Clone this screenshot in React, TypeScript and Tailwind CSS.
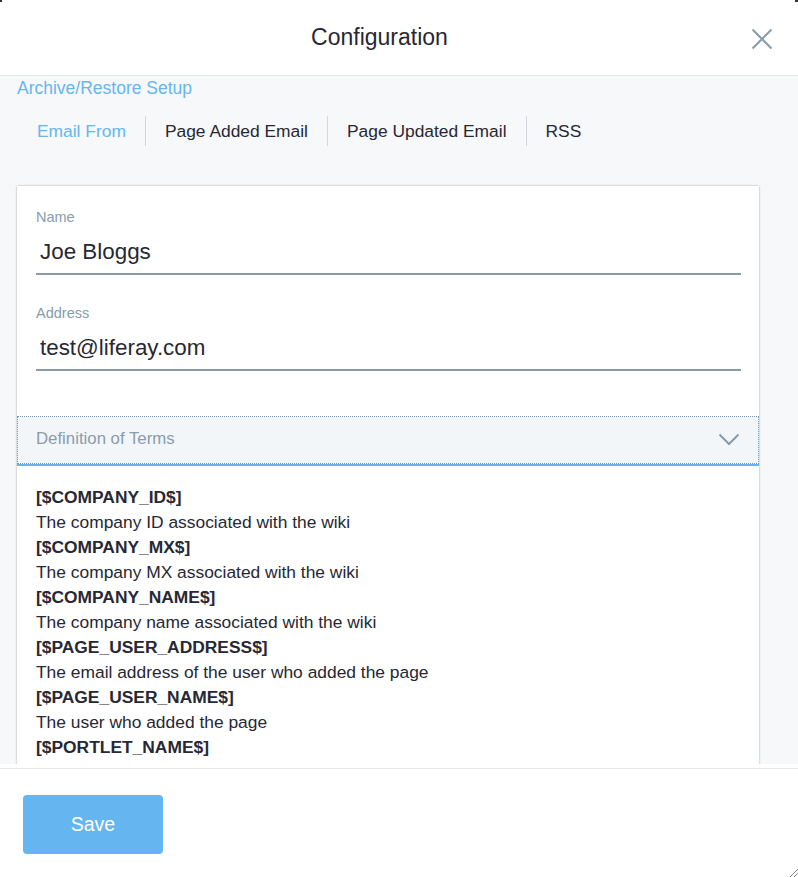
import React from "react";

const terms: [string, string | null][] = [
  ["[$COMPANY_ID$]", "The company ID associated with the wiki"],
  ["[$COMPANY_MX$]", "The company MX associated with the wiki"],
  ["[$COMPANY_NAME$]", "The company name associated with the wiki"],
  ["[$PAGE_USER_ADDRESS$]", "The email address of the user who added the page"],
  ["[$PAGE_USER_NAME$]", "The user who added the page"],
  ["[$PORTLET_NAME$]", null],
];

export default function App() {
  return (
    <div
      className="relative w-[798px] h-[877px] flex flex-col bg-white text-[#272833] overflow-hidden"
      style={{ fontFamily: '"Liberation Sans", Arial, sans-serif' }}
    >
      {/* Header */}
      <div className="relative h-[76px] shrink-0 flex items-center border-b border-[#e7e7ed] bg-white pr-[39px]">
        <div className="flex-1 text-center text-[23px] leading-[30px] pb-[2px]">Configuration</div>
        <button className="absolute left-[751px] top-[28px] w-[22px] h-[22px] flex items-center justify-center">
          <svg width="22" height="22" viewBox="0 0 22 22" fill="none" stroke="#869cad" strokeWidth="2">
            <path d="M1.5 1.5 L20.5 20.5 M20.5 1.5 L1.5 20.5" />
          </svg>
        </button>
      </div>

      {/* Body */}
      <div className="flex-1 min-h-0 overflow-hidden bg-[#f7f8f9] pl-[17px] pr-[39px]">
        <div className="text-[17.5px] leading-[24px] text-[#65b6f0]">Archive/Restore Setup</div>
        <div className="mt-[16px] flex items-center h-[30px] text-[17.4px] pl-[1px]">
          <div className="px-[19px] text-[#65b6f0] leading-[30px]">Email From</div>
          <div className="px-[19px] border-l border-[#d3d6de] leading-[30px]">Page Added Email</div>
          <div className="px-[19px] border-l border-[#d3d6de] leading-[30px]">Page Updated Email</div>
          <div className="px-[19px] border-l border-[#d3d6de] leading-[30px]">RSS</div>
        </div>

        <div className="mt-[40px] h-[600px] bg-white shadow-[0_0_2px_rgba(0,0,0,0.35)]">
          <div className="pt-[21px] pl-[19px] pr-[18px]">
            <div className="text-[14.5px] leading-[20px] text-[#869cad]">Name</div>
            <div className="pt-[5px] pb-[1px] pl-[4px] border-b-2 border-[#8a9aa8] text-[22.4px] leading-[40px]">
              Joe Bloggs
            </div>
            <div className="mt-[28px] text-[14.5px] leading-[20px] text-[#869cad]">Address</div>
            <div className="pt-[5px] pb-[1px] pl-[4px] border-b-2 border-[#8a9aa8] text-[22.4px] leading-[40px]">
              test@liferay.com
            </div>
          </div>

          <div className="mt-[45px] border-b-2 border-[#65b6f0]">
            <div className="h-[48px] bg-[#f3f6f9] border border-dotted border-[#7b93a8] flex items-center justify-between pl-[18px] pr-[18px]">
              <span className="text-[16.8px] text-[#8a9bad] pb-[3px]">Definition of Terms</span>
              <svg width="22" height="13" viewBox="0 0 22 13" fill="none" stroke="#869cad" strokeWidth="2" className="mb-[1px]">
                <path d="M1.5 1.5 L11 11 L20.5 1.5" />
              </svg>
            </div>
          </div>

          <div className="pt-[19px] pl-[19px] text-[17.4px] leading-[25px]">
            {terms.map(([k, d]) => (
              <div key={k}>
                <div className="font-bold">{k}</div>
                {d && <div>{d}</div>}
              </div>
            ))}
          </div>
        </div>
      </div>

      {/* Footer */}
      <div className="h-[4px] shrink-0 bg-white" />
      <div className="h-[109px] shrink-0 border-t border-[#e7e7ed] bg-white pt-[26px] pl-[23px]">
        <button className="w-[140px] h-[59px] rounded-[4px] bg-[#65b6f0] text-white text-[19.5px] leading-[59px] text-center">
          Save
        </button>
      </div>

      {/* corner marks */}
      <div className="absolute left-0 top-0 w-[2px] h-[2px] bg-[#333]" />
      <div className="absolute right-0 top-0 w-[3px] h-[2px] bg-[#333]" />
      <svg className="absolute right-0 bottom-0" width="10" height="10" viewBox="0 0 10 10" stroke="#888" strokeWidth="1">
        <path d="M2 10 L10 2 M6 10 L10 6" />
      </svg>
    </div>
  );
}
